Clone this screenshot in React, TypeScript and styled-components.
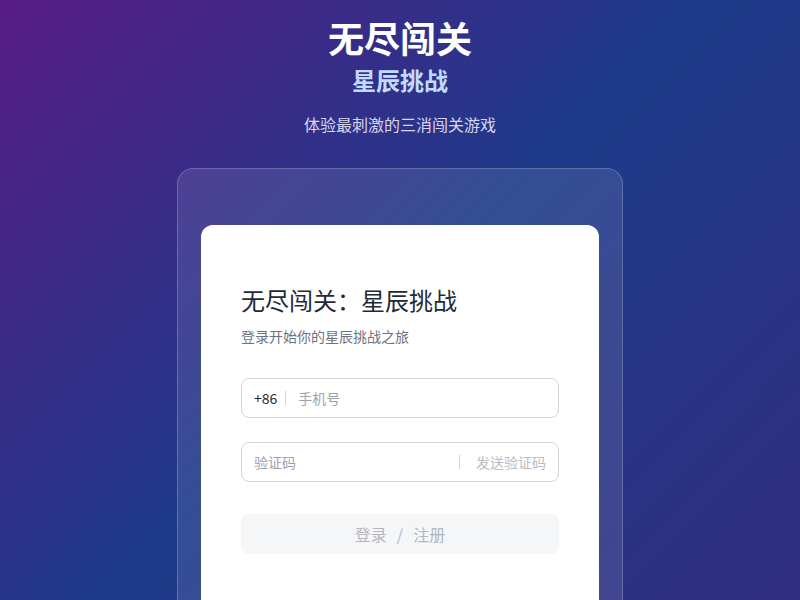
import React from "react";
import styled, { createGlobalStyle } from "styled-components";

const Global = createGlobalStyle`
  html, body { margin: 0; padding: 0; }
  body {
    font-family: "Noto Sans CJK SC", "Noto Sans", sans-serif;
  }
  * { box-sizing: border-box; }
`;

const Page = styled.div`
  height: 100vh;
  background: linear-gradient(135deg, #581c87 0%, #1e3a8a 50%, #312e81 100%);
  display: flex;
  flex-direction: column;
  align-items: center;
  padding-top: 17px;
  overflow: hidden;
`;

const Header = styled.header`
  display: flex;
  flex-direction: column;
  align-items: center;
`;

const MainTitle = styled.h1`
  margin: 0;
  font-size: 36px;
  line-height: 40px;
  font-weight: 700;
  color: #ffffff;
`;

const SubTitle = styled.h2`
  margin: 7px 0 0;
  font-size: 24px;
  line-height: 32px;
  font-weight: 700;
  color: #bfdbfe;
`;

const Tagline = styled.p`
  margin: 16px 0 0;
  font-size: 16px;
  line-height: 24px;
  color: #d9d5ee;
`;

const Glass = styled.div`
  margin-top: 32px;
  width: 446px;
  padding: 56px 23px 0;
  border-radius: 16px;
  background: rgba(255, 255, 255, 0.1);
  border: 1px solid rgba(255, 255, 255, 0.2);
  flex-shrink: 0;
  height: 600px;
`;

const Card = styled.div`
  background: #ffffff;
  border-radius: 12px;
  padding: 59px 40px 40px;
  height: 500px;
`;

const CardTitle = styled.h3`
  margin: 0;
  font-size: 24px;
  line-height: 32px;
  font-weight: 400;
  color: #1f2937;
`;

const CardSub = styled.p`
  margin: 10px 0 0;
  font-size: 14px;
  line-height: 20px;
  color: #6b7280;
`;

const Form = styled.div`
  margin-top: 32px;
  display: flex;
  flex-direction: column;
`;

const Field = styled.div<{ $gap?: number }>`
  height: 40px;
  margin-top: ${(p) => p.$gap ?? 0}px;
  border: 1px solid #d1d5db;
  border-radius: 8px;
  display: flex;
  align-items: center;
  padding: 0 12px;
  font-size: 14px;
`;

const Prefix = styled.span`
  color: #1f2937;
  font-size: 14px;
`;

const Divider = styled.span`
  width: 1px;
  height: 14px;
  background: #d1d5db;
  margin: 0 12px 0 8px;
`;

const Placeholder = styled.span`
  color: #9ca3af;
  flex: 1;
`;

const SendCode = styled.span`
  color: #b8bcc4;
`;

const CodeDivider = styled(Divider)`
  margin: 0 16px 0 0;
`;

const Submit = styled.button`
  margin-top: 32px;
  height: 40px;
  border: none;
  border-radius: 8px;
  background: #f5f6f8;
  color: #b3b6bd;
  font-family: inherit;
  font-size: 16px;
  display: flex;
  align-items: center;
  justify-content: center;
  gap: 10px;
`;

export default function App() {
  return (
    <>
      <Global />
      <Page>
        <Header>
          <MainTitle>无尽闯关</MainTitle>
          <SubTitle>星辰挑战</SubTitle>
          <Tagline>体验最刺激的三消闯关游戏</Tagline>
        </Header>
        <Glass>
          <Card>
            <CardTitle>无尽闯关：星辰挑战</CardTitle>
            <CardSub>登录开始你的星辰挑战之旅</CardSub>
            <Form>
              <Field>
                <Prefix>+86</Prefix>
                <Divider />
                <Placeholder>手机号</Placeholder>
              </Field>
              <Field $gap={24}>
                <Placeholder>验证码</Placeholder>
                <CodeDivider />
                <SendCode>发送验证码</SendCode>
              </Field>
              <Submit>
                <span>登录</span>
                <span>/</span>
                <span>注册</span>
              </Submit>
            </Form>
          </Card>
        </Glass>
      </Page>
    </>
  );
}
